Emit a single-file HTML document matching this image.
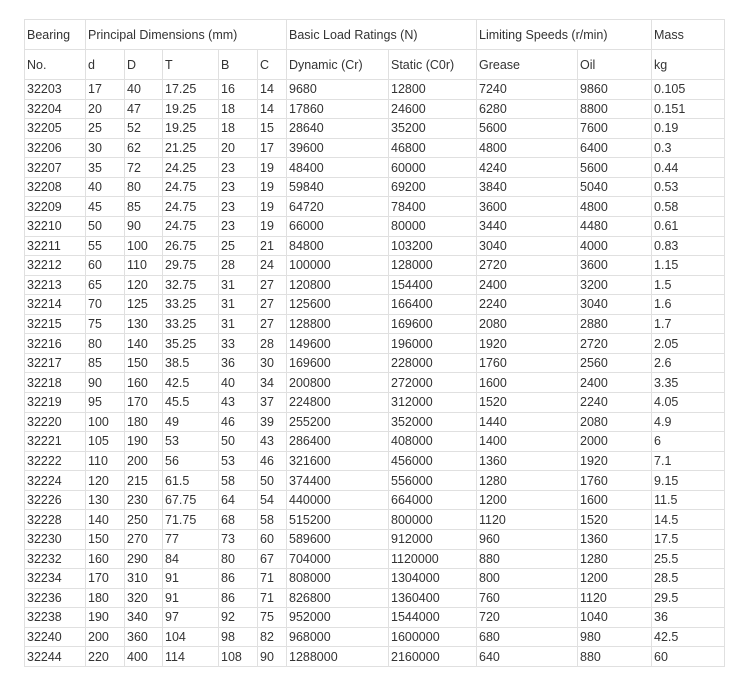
<!DOCTYPE html>
<html><head><meta charset="utf-8"><style>
body{margin:0;background:#fff;font-family:"Liberation Sans",Arial,sans-serif;font-size:12.5px;color:#333}
table{position:absolute;left:24px;top:19px;border-collapse:collapse;table-layout:fixed;width:700px}
td{border:1px solid #e0e0e0;padding:0 0 0 2px;white-space:nowrap;overflow:hidden;height:18.57px;line-height:14px}
tr.h td{height:29px}
</style></head><body>
<table>
<colgroup><col style="width:61px"><col style="width:39px"><col style="width:38px"><col style="width:56px"><col style="width:39px"><col style="width:29px"><col style="width:102px"><col style="width:88px"><col style="width:101px"><col style="width:74px"><col style="width:73px"></colgroup>
<tr class="h"><td>Bearing</td><td colspan="5">Principal Dimensions (mm)</td><td colspan="2">Basic Load Ratings (N)</td><td colspan="2">Limiting Speeds (r/min)</td><td>Mass</td></tr>
<tr class="h"><td>No.</td><td>d</td><td>D</td><td>T</td><td>B</td><td>C</td><td>Dynamic (Cr)</td><td>Static (C0r)</td><td>Grease</td><td>Oil</td><td>kg</td></tr>
<tr><td>32203</td><td>17</td><td>40</td><td>17.25</td><td>16</td><td>14</td><td>9680</td><td>12800</td><td>7240</td><td>9860</td><td>0.105</td></tr>
<tr><td>32204</td><td>20</td><td>47</td><td>19.25</td><td>18</td><td>14</td><td>17860</td><td>24600</td><td>6280</td><td>8800</td><td>0.151</td></tr>
<tr><td>32205</td><td>25</td><td>52</td><td>19.25</td><td>18</td><td>15</td><td>28640</td><td>35200</td><td>5600</td><td>7600</td><td>0.19</td></tr>
<tr><td>32206</td><td>30</td><td>62</td><td>21.25</td><td>20</td><td>17</td><td>39600</td><td>46800</td><td>4800</td><td>6400</td><td>0.3</td></tr>
<tr><td>32207</td><td>35</td><td>72</td><td>24.25</td><td>23</td><td>19</td><td>48400</td><td>60000</td><td>4240</td><td>5600</td><td>0.44</td></tr>
<tr><td>32208</td><td>40</td><td>80</td><td>24.75</td><td>23</td><td>19</td><td>59840</td><td>69200</td><td>3840</td><td>5040</td><td>0.53</td></tr>
<tr><td>32209</td><td>45</td><td>85</td><td>24.75</td><td>23</td><td>19</td><td>64720</td><td>78400</td><td>3600</td><td>4800</td><td>0.58</td></tr>
<tr><td>32210</td><td>50</td><td>90</td><td>24.75</td><td>23</td><td>19</td><td>66000</td><td>80000</td><td>3440</td><td>4480</td><td>0.61</td></tr>
<tr><td>32211</td><td>55</td><td>100</td><td>26.75</td><td>25</td><td>21</td><td>84800</td><td>103200</td><td>3040</td><td>4000</td><td>0.83</td></tr>
<tr><td>32212</td><td>60</td><td>110</td><td>29.75</td><td>28</td><td>24</td><td>100000</td><td>128000</td><td>2720</td><td>3600</td><td>1.15</td></tr>
<tr><td>32213</td><td>65</td><td>120</td><td>32.75</td><td>31</td><td>27</td><td>120800</td><td>154400</td><td>2400</td><td>3200</td><td>1.5</td></tr>
<tr><td>32214</td><td>70</td><td>125</td><td>33.25</td><td>31</td><td>27</td><td>125600</td><td>166400</td><td>2240</td><td>3040</td><td>1.6</td></tr>
<tr><td>32215</td><td>75</td><td>130</td><td>33.25</td><td>31</td><td>27</td><td>128800</td><td>169600</td><td>2080</td><td>2880</td><td>1.7</td></tr>
<tr><td>32216</td><td>80</td><td>140</td><td>35.25</td><td>33</td><td>28</td><td>149600</td><td>196000</td><td>1920</td><td>2720</td><td>2.05</td></tr>
<tr><td>32217</td><td>85</td><td>150</td><td>38.5</td><td>36</td><td>30</td><td>169600</td><td>228000</td><td>1760</td><td>2560</td><td>2.6</td></tr>
<tr><td>32218</td><td>90</td><td>160</td><td>42.5</td><td>40</td><td>34</td><td>200800</td><td>272000</td><td>1600</td><td>2400</td><td>3.35</td></tr>
<tr><td>32219</td><td>95</td><td>170</td><td>45.5</td><td>43</td><td>37</td><td>224800</td><td>312000</td><td>1520</td><td>2240</td><td>4.05</td></tr>
<tr><td>32220</td><td>100</td><td>180</td><td>49</td><td>46</td><td>39</td><td>255200</td><td>352000</td><td>1440</td><td>2080</td><td>4.9</td></tr>
<tr><td>32221</td><td>105</td><td>190</td><td>53</td><td>50</td><td>43</td><td>286400</td><td>408000</td><td>1400</td><td>2000</td><td>6</td></tr>
<tr><td>32222</td><td>110</td><td>200</td><td>56</td><td>53</td><td>46</td><td>321600</td><td>456000</td><td>1360</td><td>1920</td><td>7.1</td></tr>
<tr><td>32224</td><td>120</td><td>215</td><td>61.5</td><td>58</td><td>50</td><td>374400</td><td>556000</td><td>1280</td><td>1760</td><td>9.15</td></tr>
<tr><td>32226</td><td>130</td><td>230</td><td>67.75</td><td>64</td><td>54</td><td>440000</td><td>664000</td><td>1200</td><td>1600</td><td>11.5</td></tr>
<tr><td>32228</td><td>140</td><td>250</td><td>71.75</td><td>68</td><td>58</td><td>515200</td><td>800000</td><td>1120</td><td>1520</td><td>14.5</td></tr>
<tr><td>32230</td><td>150</td><td>270</td><td>77</td><td>73</td><td>60</td><td>589600</td><td>912000</td><td>960</td><td>1360</td><td>17.5</td></tr>
<tr><td>32232</td><td>160</td><td>290</td><td>84</td><td>80</td><td>67</td><td>704000</td><td>1120000</td><td>880</td><td>1280</td><td>25.5</td></tr>
<tr><td>32234</td><td>170</td><td>310</td><td>91</td><td>86</td><td>71</td><td>808000</td><td>1304000</td><td>800</td><td>1200</td><td>28.5</td></tr>
<tr><td>32236</td><td>180</td><td>320</td><td>91</td><td>86</td><td>71</td><td>826800</td><td>1360400</td><td>760</td><td>1120</td><td>29.5</td></tr>
<tr><td>32238</td><td>190</td><td>340</td><td>97</td><td>92</td><td>75</td><td>952000</td><td>1544000</td><td>720</td><td>1040</td><td>36</td></tr>
<tr><td>32240</td><td>200</td><td>360</td><td>104</td><td>98</td><td>82</td><td>968000</td><td>1600000</td><td>680</td><td>980</td><td>42.5</td></tr>
<tr><td>32244</td><td>220</td><td>400</td><td>114</td><td>108</td><td>90</td><td>1288000</td><td>2160000</td><td>640</td><td>880</td><td>60</td></tr>
</table>
</body></html>
